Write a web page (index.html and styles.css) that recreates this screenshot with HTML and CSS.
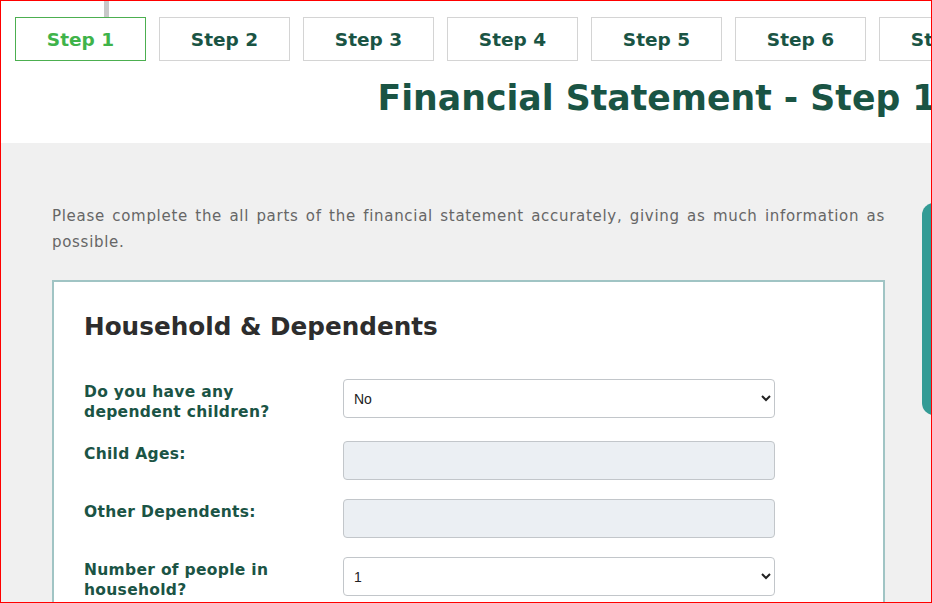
FILE: index.html
```
<!DOCTYPE html>
<html>
<head>
	<title>Financial Statement - Step 1</title>
	<meta charset="utf-8">
	<link rel="stylesheet" href="styles.css">
</head>
<body>
<div class="frame">
	<div class="step-line"></div>

	<div class="top">
		<ul class="steps">
			<li class="current">Step 1</li>
			<li>Step 2</li>
			<li>Step 3</li>
			<li>Step 4</li>
			<li>Step 5</li>
			<li>Step 6</li>
			<li>Step 7</li>
		</ul>
		<h1 class="title">Financial Statement - Step 1</h1>
	</div>

	<div class="content">
		<div class="main-col">
			<p class="intro">Please complete the all parts of the financial statement accurately, giving as much information as possible.</p>

			<div class="card">
				<h2>Household &amp; Dependents</h2>

				<div class="row">
					<label for="children">Do you have any dependent children?</label>
					<select id="children" class="field">
						<option>No</option>
						<option>Yes</option>
					</select>
				</div>

				<div class="row">
					<label for="ages">Child Ages:</label>
					<input id="ages" class="field" type="text" disabled>
				</div>

				<div class="row">
					<label for="others">Other Dependents:</label>
					<input id="others" class="field" type="text" disabled>
				</div>

				<div class="row">
					<label for="people">Number of people in household?</label>
					<select id="people" class="field">
						<option>1</option>
						<option>2</option>
						<option>3</option>
						<option>4</option>
					</select>
				</div>
			</div>
		</div>

		<div class="side"></div>
	</div>
</div>
</body>
</html>
```

FILE: styles.css
```
html,body,div,ul,li,h1,h2,p{margin:0;padding:0;}
ul{list-style-type:none;}
html,body{overflow:hidden;}
body{background:#fff;font-family:"DejaVu Sans",Verdana,sans-serif;}

.frame{position:relative;width:932px;height:603px;box-sizing:border-box;border:1px solid #f00;overflow:hidden;background:#f0f0f0;}
.step-line{position:absolute;top:0;left:103px;width:5px;height:16px;background:#c8c8c8;}

.top{background:#fff;height:142px;width:1312px;}
.steps{display:flex;gap:13px;padding:16px 0 0 14px;}
.steps li{flex:none;width:131px;height:44px;box-sizing:border-box;border:1px solid #d4d4d4;text-align:center;line-height:43px;font-size:18.5px;font-weight:700;color:#1a5444;background:#fff;}
.steps li.current{border-color:#4caf50;color:#3fb34a;}

.title{text-align:center;margin-top:14px;font-size:34.7px;font-weight:700;line-height:46px;color:#1a5444;white-space:nowrap;}

.content{display:flex;align-items:flex-start;gap:37px;padding:60px 0 0 51px;}
.main-col{flex:none;width:833px;}
.intro{font-size:15px;line-height:26px;color:#666;text-align:justify;letter-spacing:0.7px;}

.card{margin-top:25px;background:#fff;border:2px solid #a0c4c4;padding:27px 30px 40px;}
.card h2{font-size:24.7px;font-weight:700;line-height:36px;color:#2d2d2d;margin-bottom:34px;}

.row{display:flex;align-items:flex-start;margin-bottom:19px;}
.row label{flex:none;width:259px;padding:3px 40px 0 0;box-sizing:border-box;font-size:15.5px;font-weight:700;line-height:20px;letter-spacing:0.3px;color:#1b5445;}
.field{flex:none;width:432px;height:39px;box-sizing:border-box;border:1px solid #c2c6ca;border-radius:4px;background:#fff;font:14px "Liberation Sans",Arial,sans-serif;color:#222;padding:0 6px;}
input.field{background:#ebeff3;}

.side{flex:none;width:200px;height:212px;margin-top:0;background:#339b95;border-radius:12px;}
```
